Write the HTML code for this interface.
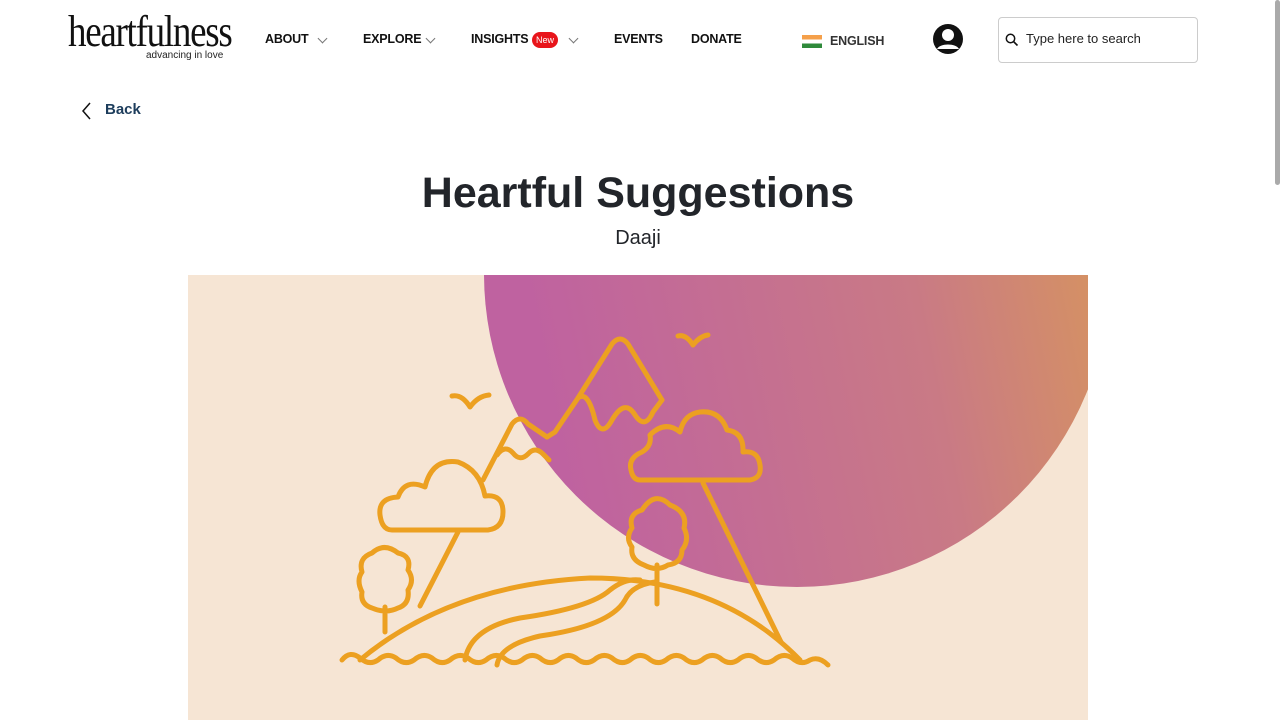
<!DOCTYPE html>
<html><head><meta charset="utf-8"><style>
*{margin:0;padding:0;box-sizing:border-box}
body{width:1280px;height:720px;overflow:hidden;background:#fff;font-family:"Liberation Sans",sans-serif;position:relative}
.a{position:absolute}
.nav{font-weight:bold;font-size:12.5px;color:#111;top:32px;letter-spacing:-0.2px}
.chev{display:inline-block;width:7px;height:7px;border-right:1.5px solid #777;border-bottom:1.5px solid #777;transform:rotate(45deg);position:absolute;top:35px}
</style></head><body>
<div class="a" style="left:68px;top:12px;font-family:'Liberation Serif',serif;font-size:44px;letter-spacing:-1.5px;color:#111;line-height:40px;transform:scaleX(0.84);transform-origin:0 0">heartfulness</div>
<div class="a" style="left:146px;top:50px;font-size:10px;color:#222;font-family:'Liberation Sans',sans-serif">advancing in love</div>
<div class="a nav" style="left:265px">ABOUT</div><span class="chev" style="left:319px"></span>
<div class="a nav" style="left:363px">EXPLORE</div><span class="chev" style="left:427px"></span>
<div class="a nav" style="left:471px">INSIGHTS</div>
<div class="a" style="left:532px;top:32px;width:26px;height:16px;border-radius:8px;background:#e8151b;color:#fff;font-size:9px;line-height:16px;text-align:center">New</div>
<span class="chev" style="left:570px"></span>
<div class="a nav" style="left:614px">EVENTS</div>
<div class="a nav" style="left:691px">DONATE</div>
<div class="a" style="left:802px;top:35px;width:20px;height:13px;background:linear-gradient(#f5a04a 0 33%,#fff 33% 66%,#2f8a3b 66%)"></div>
<div class="a nav" style="left:830px;top:34px;color:#333">ENGLISH</div>
<svg class="a" style="left:932px;top:23px" width="32" height="32" viewBox="0 0 32 32"><circle cx="16" cy="16" r="15" fill="#111"/><circle cx="16" cy="12" r="6" fill="#fff"/><path d="M5 26c3-6 19-6 22 0" fill="#fff"/></svg>
<div class="a" style="left:998px;top:17px;width:200px;height:46px;border:1px solid #ccc;border-radius:4px"></div>
<svg class="a" style="left:1005px;top:33px" width="14" height="14" viewBox="0 0 14 14"><circle cx="5.5" cy="5.5" r="4.2" fill="none" stroke="#111" stroke-width="1.5"/><path d="M8.5 8.5L12.5 12.5" stroke="#111" stroke-width="1.6"/></svg>
<div class="a" style="left:1026px;top:31px;font-size:13px;color:#222">Type here to search</div>
<div class="a" style="left:1275px;top:0;width:5px;height:185px;background:#aaa;border-radius:3px"></div>
<svg class="a" style="left:80px;top:102px" width="12" height="18" viewBox="0 0 12 18"><path d="M10 1L3 9l7 8" fill="none" stroke="#111" stroke-width="1.5"/></svg>
<div class="a" style="left:105px;top:101px;font-weight:bold;font-size:15px;color:#1d3d5c">Back</div>
<div class="a" style="left:0;width:1276px;top:169px;text-align:center;font-weight:bold;font-size:43px;color:#22252a">Heartful Suggestions</div>
<div class="a" style="left:0;width:1276px;top:227px;text-align:center;font-size:20px;color:#22252a">Daaji</div>
<svg class="a" style="left:188px;top:275px" width="900" height="445" viewBox="188 275 900 445">
<defs><linearGradient id="g" x1="0" y1="0.2" x2="1" y2="0"><stop offset="0" stop-color="#bf62a0"/><stop offset="0.6" stop-color="#c97a85"/><stop offset="1" stop-color="#da9b55"/></linearGradient></defs>
<rect x="188" y="275" width="900" height="445" fill="#f6e5d4"/>
<circle cx="797" cy="274" r="313" fill="url(#g)"/>
<g fill="none" stroke="#eca021" stroke-width="5" stroke-linecap="round" stroke-linejoin="round">
<path d="M420 606L458 532"/>
<path d="M483 480L512 424Q520 414 528 424L547 437"/>
<path d="M497 455Q505 444 513 453Q520 462 528 454Q535 446 543 454L549 460"/>
<path d="M547 437L555 432L578 398L612 344Q620 334 628 344L662 400"/>
<path d="M578 398Q588 390 595 420Q602 438 612 420Q625 398 635 415Q645 430 653 412L662 400"/>
<path d="M703 483L781 642"/>
<path d="M392 530L488 530Q503 528 503 512Q503 494 485 496Q480 470 458 462Q432 458 425 487Q405 478 398 497Q378 498 380 515Q382 530 392 530Z"/>
<path d="M640 480L750 480Q762 478 760 465Q758 450 743 452Q744 432 727 430Q720 410 700 412Q684 414 680 432Q665 420 650 435Q652 446 642 452Q628 458 631 470Q633 480 640 480Z"/>
<path d="M385 632L385 607M372 608Q360 604 362 592Q356 580 362 572Q358 558 372 553Q384 542 398 553Q412 556 408 570Q415 580 408 590Q410 604 398 608Q386 614 372 608Z"/>
<path d="M657 604L657 565M644 565Q630 560 632 547Q625 538 632 528Q628 514 642 510Q655 490 670 505Q688 512 684 528Q690 540 682 550Q682 563 668 565Q657 572 644 565Z"/>
<path d="M360 660Q450 585 590 578Q720 578 800 660"/>
<path d="M465 660Q470 628 520 618Q590 608 610 590Q625 578 640 580"/>
<path d="M497 665Q500 645 540 636Q610 626 625 600Q632 585 655 582"/>
<path d="M342 660Q350 650 360 658Q369 666 378 660Q387 652 396 658Q405 666 414 660Q423 652 432 658Q441 666 450 660Q459 652 468 658Q477 666 486 660Q495 652 504 658Q513 666 522 660Q531 652 540 658Q549 666 558 660Q567 652 576 658Q585 666 594 660Q603 652 612 658Q621 666 630 660Q639 652 648 658Q657 666 666 660Q675 652 684 658Q693 666 702 660Q711 652 720 658Q729 666 738 660Q747 652 756 658Q765 666 774 660Q783 652 792 658Q801 666 810 660Q819 656 828 665"/>
<path d="M452 396Q462 394 470 407Q478 396 489 395"/>
<path d="M678 336Q686 334 693 345Q700 336 708 335"/>
</g></svg>
</body></html>
